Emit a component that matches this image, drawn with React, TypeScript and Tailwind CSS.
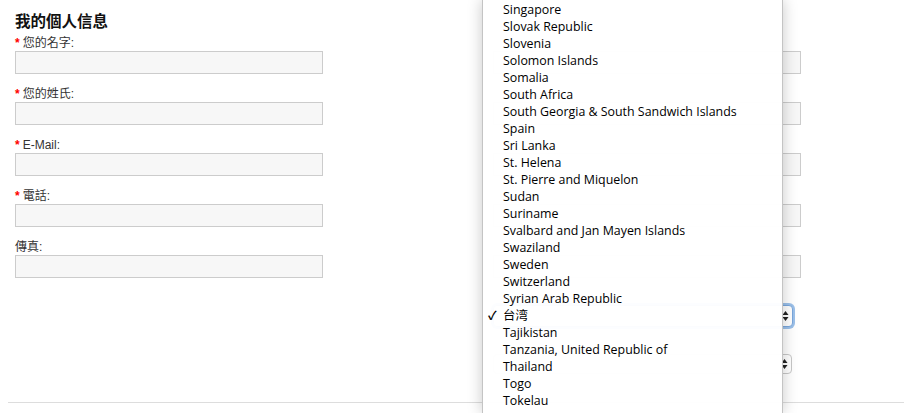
import React from 'react';

const countries = [
  'Singapore',
  'Slovak Republic',
  'Slovenia',
  'Solomon Islands',
  'Somalia',
  'South Africa',
  'South Georgia & South Sandwich Islands',
  'Spain',
  'Sri Lanka',
  'St. Helena',
  'St. Pierre and Miquelon',
  'Sudan',
  'Suriname',
  'Svalbard and Jan Mayen Islands',
  'Swaziland',
  'Sweden',
  'Switzerland',
  'Syrian Arab Republic',
  '台湾',
  'Tajikistan',
  'Tanzania, United Republic of',
  'Thailand',
  'Togo',
  'Tokelau',
];

const Field: React.FC<{ label?: string; required?: boolean }> = ({ label, required }) => (
  <div className="mb-[13px]">
    <div className="h-[14px] leading-[14px] text-[12px] text-[#333]">
      {required && <span className="text-[#f00] font-bold mr-[3px]">*</span>}
      {label}
    </div>
    <input
      type="text"
      className="mt-[1px] block w-[308px] h-[23px] border border-[#ccc] bg-[#f7f7f7] outline-none"
    />
  </div>
);

const Arrows: React.FC = () => (
  <svg width="7" height="12" viewBox="0 0 7 12" className="block">
    <path d="M3.5 1 L6.5 5 H0.5 Z" fill="#222" />
    <path d="M3.5 11 L6.5 7 H0.5 Z" fill="#222" />
  </svg>
);

export default function App() {
  return (
    <div
      className="relative w-[904px] h-[413px] overflow-hidden bg-white"
      style={{ fontFamily: '"Liberation Sans", Arial, "Noto Sans CJK TC", sans-serif' }}
    >
      <div className="flex gap-[170px] pl-[15px] pt-[12px]">
        <div className="w-[308px]">
          <h2 className="h-[20px] leading-[20px] mb-[4px] text-[15.5px] font-bold text-[#111]">我的個人信息</h2>
          <Field label="您的名字:" required />
          <Field label="您的姓氏:" required />
          <Field label="E-Mail:" required />
          <Field label="電話:" required />
          <Field label="傳真:" />
        </div>
        {/* right column: mostly hidden behind the open country menu */}
        <div className="w-[308px] pt-[24px]">
          <Field />
          <Field />
          <Field />
          <Field />
          <Field />
          <div className="mt-[7px]">
            <div className="h-[14px]" />
            <div className="flex items-center justify-end w-[300px] h-[22px] rounded-[4px] border border-[#7aa7dc] shadow-[0_0_0_2px_#9cc1ea] bg-white pr-[3px]">
              <Arrows />
            </div>
          </div>
          <div className="mt-[13px]">
            <div className="h-[14px]" />
            <div className="flex items-center justify-end w-[299px] h-[20px] rounded-[4px] border border-[#c8c8c8] bg-white pr-[3px]">
              <Arrows />
            </div>
          </div>
        </div>
      </div>

      <div className="absolute left-[8px] right-0 top-[402px] h-px bg-[#ddd]" />

      <div
        className="absolute left-[482px] top-[0px] w-[301px] h-[413px] bg-white/[0.97] border-l border-r border-[#c4c4c4] shadow-[0_0_14px_rgba(0,0,0,0.22)]"
        style={{ fontFamily: '"Open Sans", "Noto Sans CJK TC", sans-serif' }}
      >
        <ul className="pt-[1px]">
          {countries.map((c) => (
            <li key={c} className="relative h-[17px] leading-[17px] pl-[20px] text-[12.4px] text-black">
              {c === '台湾' && <span className="absolute left-[5px] top-0 font-bold text-[12px]">✓</span>}
              {c}
            </li>
          ))}
        </ul>
      </div>
    </div>
  );
}
